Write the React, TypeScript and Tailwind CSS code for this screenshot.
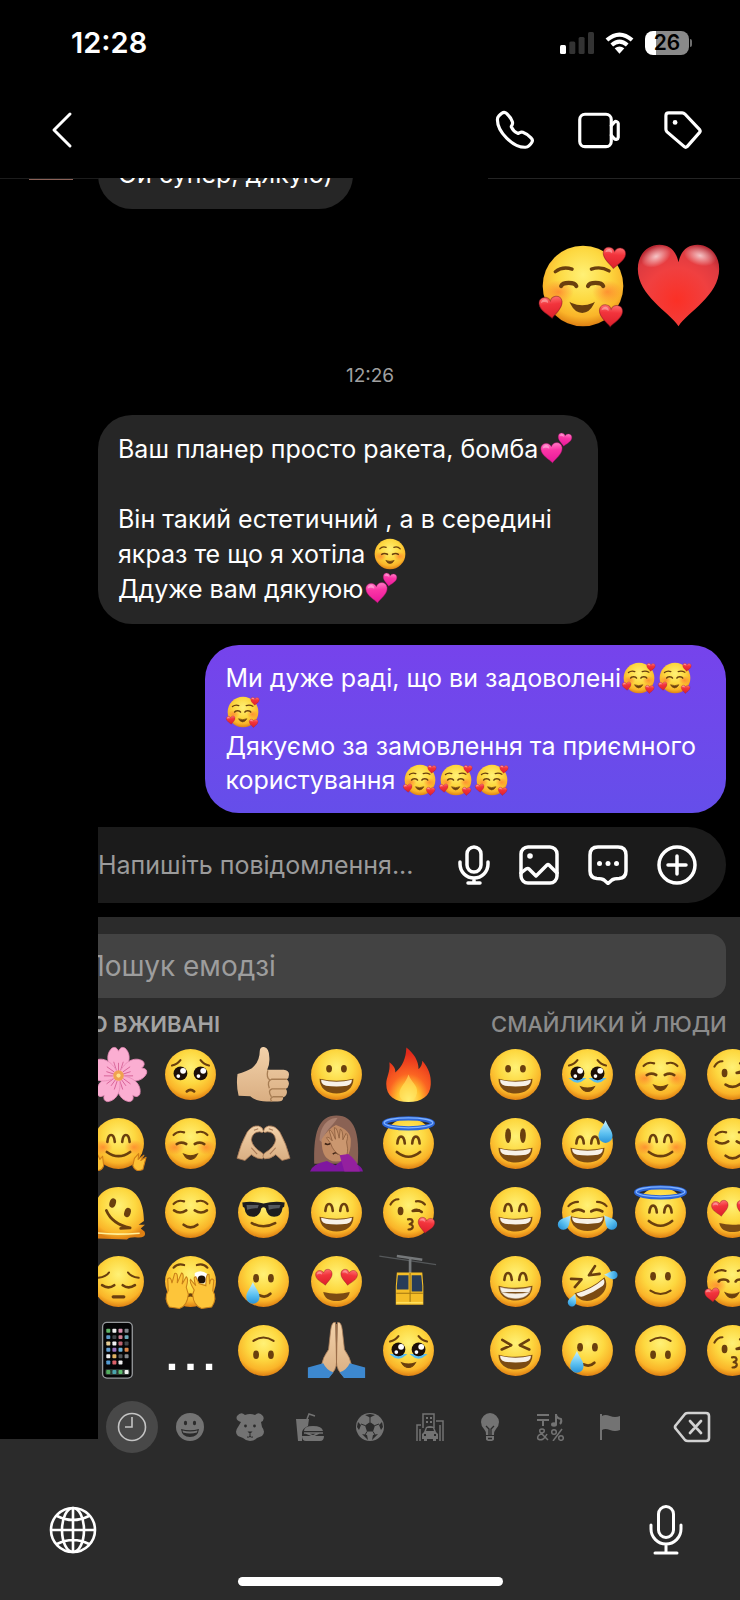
import type { ReactNode } from "react";

const ink = "#6a3f0e";

const Defs = () => (
  <svg className="absolute h-0 w-0" aria-hidden="true">
    <defs>
      <radialGradient id="face" cx="50%" cy="36%" r="64%">
        <stop offset="0" stopColor="#fff176" />
        <stop offset="0.5" stopColor="#fdd840" />
        <stop offset="0.82" stopColor="#fab429" />
        <stop offset="1" stopColor="#de8013" />
      </radialGradient>
      <linearGradient id="heart" x1="0" y1="0" x2="0" y2="1">
        <stop offset="0" stopColor="#ff6f70" />
        <stop offset="0.35" stopColor="#f2343c" />
        <stop offset="1" stopColor="#dc1f2b" />
      </linearGradient>
      <radialGradient id="bigHeart" cx="48%" cy="68%" r="72%">
        <stop offset="0" stopColor="#fb3026" />
        <stop offset="0.55" stopColor="#f04040" />
        <stop offset="0.85" stopColor="#dd3a40" />
        <stop offset="1" stopColor="#b82832" />
      </radialGradient>
      <radialGradient id="shine">
        <stop offset="0" stopColor="#fff" stopOpacity="0.7" />
        <stop offset="1" stopColor="#fff" stopOpacity="0" />
      </radialGradient>
      <linearGradient id="pink" x1="0" y1="0" x2="0" y2="1">
        <stop offset="0" stopColor="#ff7cc4" />
        <stop offset="0.35" stopColor="#fb35a6" />
        <stop offset="1" stopColor="#e8179a" />
      </linearGradient>
      <linearGradient id="drop" x1="0" y1="0" x2="0" y2="1">
        <stop offset="0" stopColor="#c9f1ff" />
        <stop offset="0.6" stopColor="#5bc0f0" />
        <stop offset="1" stopColor="#2a93d8" />
      </linearGradient>
      <radialGradient id="flush">
        <stop offset="0" stopColor="#ff6a2b" stopOpacity="0.6" />
        <stop offset="1" stopColor="#ff6a2b" stopOpacity="0" />
      </radialGradient>
      <radialGradient id="flame" cx="50%" cy="95%" r="85%">
        <stop offset="0" stopColor="#fff583" />
        <stop offset="0.3" stopColor="#ffc02e" />
        <stop offset="0.55" stopColor="#fb6422" />
        <stop offset="1" stopColor="#e2291b" />
      </radialGradient>
      <linearGradient id="skin" x1="0" y1="0" x2="0" y2="1">
        <stop offset="0" stopColor="#f3d2aa" />
        <stop offset="1" stopColor="#d9ae82" />
      </linearGradient>
    </defs>
  </svg>
);

const heartPath = "M50 92C38 76 4 58 4 30C4 14 15 6 27 6C38 6 46 12 50 22C54 12 62 6 73 6C85 6 96 14 96 30C96 58 62 76 50 92Z";

const Heart = ({ x, y, s, r = 0, fill = "url(#heart)", edge = "#7c1220" }: { x: number; y: number; s: number; r?: number; fill?: string; edge?: string }) => (
  <g transform={`translate(${x} ${y}) rotate(${r}) scale(${s / 100}) translate(-50 -50)`}>
    <path d={heartPath} fill={fill} stroke={edge} strokeOpacity="0.5" strokeWidth="4" />
    <path d="M12 28C13 16 24 11 32 14C40 17 42 24 40 30C30 22 18 24 12 28Z" fill="#fff" opacity="0.35" />
  </g>
);

const Drop = ({ x, y, s = 1, r = 0 }: { x: number; y: number; s?: number; r?: number }) => (
  <path
    transform={`translate(${x} ${y}) rotate(${r}) scale(${s})`}
    d="M0 -20C5 -8 12 -2 12 7A12 12 0 0 1 -12 7C-12 -2 -5 -8 0 -20Z"
    fill="url(#drop)"
  />
);

const Line = ({ d, w = 4 }: { d: string; w?: number }) => (
  <path d={d} fill="none" stroke={ink} strokeWidth={w} strokeLinecap="round" strokeLinejoin="round" />
);

const Ball = () => <circle cx="50" cy="50" r="48" fill="url(#face)" />;

const Flush = () => (
  <>
    <ellipse cx="21" cy="57" rx="18" ry="14" fill="url(#flush)" />
    <ellipse cx="79" cy="57" rx="18" ry="14" fill="url(#flush)" />
  </>
);

const Ovals = ({ y = 40, ry = 8, x1 = 36, x2 = 64 }: { y?: number; ry?: number; x1?: number; x2?: number }) => (
  <>
    <ellipse cx={x1} cy={y} rx="5.5" ry={ry} fill={ink} />
    <ellipse cx={x2} cy={y} rx="5.5" ry={ry} fill={ink} />
  </>
);

const Arches = ({ y = 0 }: { y?: number }) => (
  <g transform={`translate(0 ${y})`}>
    <Line w={5} d="M29 47C30 36 33 34 36 34C39 34 42 36 43 47M57 47C58 36 61 34 64 34C67 34 70 36 71 47" />
  </g>
);

const FlatArches = () => <Line w={5} d="M24 51Q32 46 42 51M58 51Q68 46 76 51" />;
const Brows = () => <Line w={4} d="M18 34Q26 25 38 29M62 29Q74 25 82 34" />;

const Laugh = ({ y = 0, teeth = false }: { y?: number; teeth?: boolean }) => (
  <g transform={`translate(0 ${y})`}>
    <path d="M18 58Q50 66 82 58C82 76 68 86 50 86S18 76 18 58Z" fill="#7b4b13" />
    {teeth ? (
      <path d="M21 61Q50 68 79 61C77 76 66 82 50 82S23 76 21 61ZM22 70Q50 76 78 70" fill="#f5efe6" stroke="#c8bba6" strokeWidth="1" />
    ) : (
      <path d="M21 60Q50 67 79 60C79 67 75 70 70 71Q50 74 30 71C25 70 21 67 21 60Z" fill="#f7f1e8" />
    )}
  </g>
);

const Relaxed = () => (
  <>
    <Ball />
    <Flush />
    <Brows />
    <FlatArches />
    <path d="M37 70Q50 76 63 70Q58 80 50 80T37 70Z" fill={ink} stroke={ink} strokeWidth="2" />
  </>
);

const Loved = () => (
  <>
    <Ball />
    <Flush />
    <Line w={4} d="M17 33Q26 26 37 30M60 30Q71 26 81 32" />
    <Line w={5} d="M24 50C26 45 40 45 42 50M56 50C58 45 72 45 74 50" />
    <path d="M36 71Q49 77 62 71Q57 81 49 81T36 71Z" fill={ink} stroke={ink} strokeWidth="2" />
    <Heart x={87} y={17} s={29} r={4} />
    <Heart x={12} y={76} s={30} r={-6} />
    <Heart x={83} y={86} s={30} r={3} />
  </>
);

const ShinyEyes = ({ tear = false }: { tear?: boolean }) => (
  <>
    {tear && <path d="M18 58Q31 70 44 58ZM56 58Q69 70 82 58Z" fill="#59bdf0" stroke="#59bdf0" strokeWidth="3" />}
    <circle cx="31" cy="48" r="13" fill="#1c0f08" />
    <circle cx="69" cy="48" r="13" fill="#1c0f08" />
    <circle cx="36" cy="43" r="5.5" fill="#fff" />
    <circle cx="74" cy="43" r="5.5" fill="#fff" />
    <circle cx="27" cy="53" r="3.5" fill="#fff" />
    <circle cx="65" cy="53" r="3.5" fill="#fff" />
    <Line d="M15 33Q25 31 31 23M85 33Q75 31 69 23" />
  </>
);

const Winking = ({ kiss = false }: { kiss?: boolean }) => (
  <>
    <Ball />
    <Line d="M16 35Q21 25 31 25M64 29Q74 27 81 35" />
    <ellipse cx="35" cy="47" rx="5.5" ry="8" fill={ink} />
    <Line w={5} d="M58 47Q67 42 75 49M58 47L70 46" />
    {kiss ? (
      <>
        <Line w={4} d="M49 63C59 61 61 69 52 72C61 73 60 82 50 82" />
        <Heart x={83} y={75} s={34} r={8} />
      </>
    ) : (
      <Line w={5} d="M37 69Q52 79 67 66" />
    )}
  </>
);

const Halo = () => (
  <>
    <Ball />
    <ellipse cx="50" cy="12" rx="46" ry="9.5" fill="none" stroke="#2c66d8" strokeWidth="8" />
    <ellipse cx="50" cy="11" rx="46" ry="9.5" fill="none" stroke="#7fb2ff" strokeWidth="2.5" />
    <Arches y={3} />
    <Line w={5} d="M28 66Q50 84 72 66" />
  </>
);

const HeartEyes = () => (
  <>
    <Ball />
    <Heart x={27} y={43} s={34} r={-8} />
    <Heart x={73} y={43} s={34} r={8} />
    <path d="M25 70Q50 76 75 70C73 82 63 87 50 87S27 82 25 70Z" fill="#7b4b13" />
  </>
);

const TearSmile = () => (
  <>
    <Ball />
    <Ovals y={44} />
    <Line w={5} d="M42 76Q54 82 63 73" />
    <Drop x={30} y={72} s={1.05} />
  </>
);

const art: Record<string, ReactNode> = {
  "🥰": <Loved />,
  "☺️": <Relaxed />,
  "❤️": (
    <>
      <path d="M50 99C39 82 1 62 1 30C1 12 13 1 27 1C39 1 47 8 50 22C53 8 61 1 73 1C87 1 99 12 99 30C99 62 61 82 50 99Z" fill="url(#bigHeart)" />
      <ellipse cx="23" cy="15" rx="19" ry="12" fill="url(#shine)" transform="rotate(-25 23 15)" />
      <ellipse cx="76" cy="14" rx="20" ry="12" fill="url(#shine)" transform="rotate(15 76 14)" />
    </>
  ),
  "💕": (
    <>
      <Heart x={37} y={63} s={72} r={-4} fill="url(#pink)" edge="#c8107f" />
      <Heart x={77} y={22} s={46} r={8} fill="url(#pink)" edge="#c8107f" />
    </>
  ),
  "🌸": (
    <>
      {[0, 72, 144, 216, 288].map((a) => (
        <g key={a} transform={`rotate(${a} 50 52)`}>
          <path d="M50 52C28 36 24 12 38 0Q46 -4 50 6Q54 -4 62 0C76 12 72 36 50 52Z" fill="#fbaed2" stroke="#e88bb8" strokeWidth="1.5" />
          <path d="M50 48V28M46 42L41 26M54 42L59 26" stroke="#c8447f" strokeWidth="1.2" />
        </g>
      ))}
      <circle cx="50" cy="52" r="10" fill="#f0a24f" />
      <circle cx="50" cy="52" r="4" fill="#ffe08a" />
    </>
  ),
  "🥺": (
    <>
      <Ball />
      <ShinyEyes />
      <Line w={5} d="M43 82Q50 76 57 82" />
    </>
  ),
  "🥹": (
    <>
      <Ball />
      <ShinyEyes tear />
      <path d="M37 73Q50 78 63 73Q58 82 50 82T37 73Z" fill={ink} stroke={ink} strokeWidth="2" />
    </>
  ),
  "👍🏼": (
    <>
      <path d="M1 49Q18 44 28 38Q43 26 43 5Q44 -3 51 -2Q61 0 61 18Q62 31 57 41H88Q99 42 98 51Q98 57 94 59Q100 64 97 71Q96 76 92 77Q96 82 93 88Q91 92 87 93Q88 101 77 101H56Q36 101 25 91L3 90Q-2 70 1 49Z" fill="url(#skin)" />
      <path d="M58 42Q55 57 62 60M94 59H65Q56 62 61 76M92 77H66Q57 80 65 92M87 92H68Q60 96 66 101" fill="none" stroke="#a77d53" strokeWidth="2.5" />
    </>
  ),
  "😀": (
    <>
      <Ball />
      <Ovals y={39} ry={7} />
      <Laugh />
    </>
  ),
  "😃": (
    <>
      <Ball />
      <Ovals y={35} ry={14} />
      <Laugh />
    </>
  ),
  "🔥": (
    <>
      <path d="M46 -1C60 10 69 24 69 40C74 35 76 30 76 24C88 38 93 52 92 69C91 91 75 102 50 102C24 102 8 91 8 68C8 54 16 47 14 27C22 33 26 40 25 46C39 34 45 20 46 -1Z" fill="url(#flame)" />
      <path d="M50 50C54 64 68 69 66 85Q63 101 48 101Q33 100 33 86C33 73 45 67 50 50Z" fill="#ffe660" opacity="0.6" />
    </>
  ),
  "🤗": (
    <>
      <Ball />
      <Flush />
      <Arches />
      <Line w={5} d="M28 66Q50 82 72 66" />
      <path d="M-2 70L8 78L10 70L15 80L20 74L22 92Q18 104 5 100ZM102 76L92 82L98 72L87 80L88 69L80 78L77 92Q82 105 96 99Z" fill="#fcc135" stroke="#cf7e17" strokeWidth="2" strokeLinejoin="round" />
    </>
  ),
  "🫶🏼": (
    <>
      <path d="M0 78Q7 50 19 29Q28 15 41 17Q49 19 50 27Q49 31 43 28Q29 28 27 43Q29 57 48 68Q54 75 48 79Q38 80 27 71L15 82Z" fill="url(#skin)" stroke="#a77855" strokeWidth="1.5" />
      <path d="M100 78Q93 50 81 29Q72 15 59 17Q51 19 50 27Q51 31 57 28Q71 28 73 43Q71 57 52 68Q46 75 52 79Q62 80 73 71L85 82Z" fill="url(#skin)" stroke="#a77855" strokeWidth="1.5" />
      <path d="M32 25L40 22M68 25L60 22M27 58L38 70M73 58L62 70" stroke="#a77855" strokeWidth="2" />
    </>
  ),
  "🤦🏽‍♀️": (
    <>
      <path d="M8 88C6 30 16 -3 50 -3S94 30 90 88Z" fill="#8a6254" />
      <path d="M18 44C20 10 40 1 52 2C42 18 28 25 23 48Z" fill="#a98070" />
      <path d="M22 42Q34 22 49 15Q78 25 77 46Q77 84 49 84T22 42Z" fill="#c08a64" />
      <path d="M28 50Q34 54 40 49M43 70Q49 65 54 70" fill="none" stroke="#3f2416" strokeWidth="3" />
      <path d="M0 103Q5 88 32 83L48 91L67 78L86 89Q98 92 100 103Z" fill="#7f16a0" />
      <path d="M58 73Q44 66 39 50L31 39Q35 36 42 45L36 25Q40 22 48 42L46 20Q51 19 55 40L57 23Q62 23 62 43L68 31Q73 34 69 47L71 60Q71 72 67 76Z" fill="#cb976f" stroke="#8a5c3d" strokeWidth="1.5" />
      <path d="M56 72L72 70Q90 82 94 103H65Z" fill="#94209f" />
    </>
  ),
  "😇": <Halo />,
  "🫠": (
    <>
      <path d="M2 72C-2 28 18 2 50 2S98 28 98 66L88 73H100L92 80L99 86Q104 98 86 97Q70 96 66 101L8 99Q-4 96 2 84Z" fill="url(#face)" />
      <ellipse cx="39" cy="32" rx="6" ry="9" fill={ink} transform="rotate(18 39 32)" />
      <ellipse cx="67" cy="50" rx="6" ry="9" fill={ink} transform="rotate(18 67 50)" />
      <Line w={5} d="M27 46Q38 72 72 79M54 80L72 79" />
      <path d="M5 88Q40 93 90 89" stroke="#fff09a" strokeWidth="3" fill="none" />
    </>
  ),
  "😌": (
    <>
      <Ball />
      <Brows />
      <Line w={5} d="M19 46Q30 54 42 46M58 46Q70 54 81 46" />
      <Line w={5} d="M37 73Q50 83 63 73" />
    </>
  ),
  "😎": (
    <>
      <Ball />
      <path d="M10 31Q30 28 50 33Q70 28 90 31L89 39L86 41Q84 58 70 58Q57 58 54 42Q50 38 46 42Q43 58 30 58Q16 58 14 41L11 39Z" fill="#1d1d1f" />
      <path d="M18 36L41 36L39 42Q29 41 19 45ZM59 36L82 36L80 42Q70 41 60 45Z" fill="#55595e" />
      <Line w={5} d="M28 70Q50 82 72 70" />
    </>
  ),
  "😄": (
    <>
      <Ball />
      <Arches />
      <Laugh />
    </>
  ),
  "😁": (
    <>
      <Ball />
      <Arches />
      <Laugh teeth />
    </>
  ),
  "😘": <Winking kiss />,
  "😉": <Winking />,
  "😔": (
    <>
      <Ball />
      <Line d="M12 43Q27 41 32 33M88 43Q73 41 68 33" />
      <Line w={5} d="M19 57Q31 65 42 57M58 57Q69 65 81 57" />
      <Line w={6} d="M40 79H60" />
    </>
  ),
  "🫣": (
    <>
      <Ball />
      <Line w={4} d="M18 24Q26 15 38 19M62 19Q74 15 82 24" />
      <path d="M58 34Q70 26 82 36V54H58Z" fill="#fff" />
      <circle cx="71" cy="46" r="7.5" fill="#21130a" />
      <path d="M40 80Q50 70 60 80" stroke={ink} strokeWidth="6" fill="none" />
      <path
        d="M10 98Q-1 82 8 67L7 45Q13 39 15 53L20 35Q27 31 25 53L33 34Q39 35 34 55L42 41Q47 44 42 61L46 74Q44 96 29 101ZM90 98Q101 82 92 67L94 48Q88 40 86 55L85 37Q79 33 79 58L66 54L60 41Q54 40 60 58L50 46Q47 50 57 66L54 75Q56 96 71 101Z"
        fill="#fdc53a"
        stroke="#c98019"
        strokeWidth="2"
      />
    </>
  ),
  "🥲": <TearSmile />,
  "😍": <HeartEyes />,
  "🚡": (
    <>
      <path d="M-5 2L102 18" stroke="#55585a" strokeWidth="2.5" />
      <path d="M28 2L76 9M53 8V36" stroke="#75787a" strokeWidth="5" />
      <path d="M28 33H76L78 59V94H26V59Z" fill="#f4bd27" />
      <path d="M30 38H50V65H28V58ZM56 38H74L76 58V69H56Z" fill="#273c59" />
      <path d="M53 34V91M27 72H77" stroke="#a17611" strokeWidth="2" />
      <path d="M27 90H77" stroke="#ffe05d" strokeWidth="3" />
    </>
  ),
  "📱": (
    <>
      <rect x="20" y="-3" width="56" height="105" rx="8" fill="#050506" stroke="#96999c" strokeWidth="2.5" />
      {["#61b569", "#eeeeee", "#d88fae", "#80868d", "#5b96c8", "#43474b", "#cc7d90", "#6ba9b9", "#e5cc93", "#f2f2f2", "#bd6472", "#44484b", "#629fd1", "#9871bd", "#6eb2d5", "#de8748", "#eeeeee", "#e1b364", "#54575a", "#85898d", "#539bd2", "#dd6269", "#eeeeee"].map((c, i) => (
        <rect key={i} x={27 + (i % 4) * 11.5} y={9 + Math.floor(i / 4) * 12} width="7.5" height="7.5" rx="1.5" fill={c} />
      ))}
      <rect x="25" y="85" width="46" height="11" rx="3" fill="#2d3833" />
      {["#52ae5e", "#4aa5ae", "#5ebd6f", "#f2f2f2"].map((c, i) => (
        <rect key={c} x={27 + i * 11.5} y="87" width="7.5" height="7.5" rx="1.5" fill={c} />
      ))}
    </>
  ),
  "…": <path d="M9 75H21V87H9ZM44 75H56V87H44ZM79 75H91V87H79Z" fill="#fff" />,
  "🙃": (
    <>
      <Ball />
      <Ovals y={58} />
      <Line d="M31 32Q50 19 69 32" />
    </>
  ),
  "🙂": (
    <>
      <Ball />
      <Ovals y={40} />
      <Line d="M31 67Q50 80 69 67" />
    </>
  ),
  "🙏🏼": (
    <>
      <path d="M48 -3Q41 -5 39 12L35 48Q24 63 21 80L37 98Q50 87 50 72Z" fill="url(#skin)" stroke="#a87c57" strokeWidth="1.5" />
      <path d="M52 -3Q59 -5 61 12L65 48Q76 63 79 80L63 98Q50 87 50 72Z" fill="url(#skin)" stroke="#a87c57" strokeWidth="1.5" />
      <path d="M50 0V78" stroke="#9a6d49" strokeWidth="2" />
      <path d="M-4 82L25 74Q31 87 44 91L36 102H-4ZM104 82L75 74Q69 87 56 91L64 102H104Z" fill="#3d88cf" />
    </>
  ),
  "😅": (
    <>
      <Ball />
      <Arches y={3} />
      <Laugh />
      <Drop x={84} y={28} s={1.1} />
    </>
  ),
  "😊": (
    <>
      <Ball />
      <Flush />
      <Arches />
      <Line w={5} d="M28 66Q50 82 72 66" />
    </>
  ),
  "😂": (
    <>
      <Ball />
      <Line w={5} d="M22 48Q33 41 43 48M57 48Q67 41 78 48" />
      <Line d="M14 38Q21 30 32 30M86 38Q79 30 68 30" />
      <Laugh y={-1} />
      <Drop x={8} y={68} s={0.85} r={40} />
      <Drop x={92} y={68} s={0.85} r={-40} />
    </>
  ),
  "🤣": (
    <>
      <Ball />
      <g transform="rotate(-28 50 50)">
        <Line w={5} d="M25 31L42 41L24 48M76 31L58 41L77 48" />
        <Laugh />
        <Drop x={9} y={68} s={0.65} r={50} />
        <Drop x={95} y={60} s={0.65} r={-60} />
      </g>
    </>
  ),
  "😆": (
    <>
      <Ball />
      <Line w={5} d="M25 30L42 40L24 48M75 30L58 40L76 48" />
      <Laugh />
    </>
  ),
  "😗": (
    <>
      <Ball />
      <Line d="M16 35Q21 25 31 25M64 29Q74 27 81 35" />
      <ellipse cx="35" cy="47" rx="5.5" ry="8" fill={ink} />
      <Line w={5} d="M58 47Q67 42 75 49M58 47L70 46" />
      <Line w={4} d="M49 63C59 61 61 69 52 72C61 73 60 82 50 82" />
    </>
  ),
};

const Emoji = ({ e, className }: { e: string; className: string }) => (
  <svg viewBox="0 0 100 100" role="img" aria-label={e} className={`shrink-0 overflow-visible ${className}`}>
    {art[e]}
  </svg>
);

const T = ({ e }: { e: string }) => <Emoji e={e} className="mx-[2px] inline-block size-8 align-[-7px]" />;

const recent = ["🌸", "🥺", "👍🏼", "😀", "🔥", "🤗", "☺️", "🫶🏼", "🤦🏽‍♀️", "😇", "🫠", "😌", "😎", "😄", "😘", "😔", "🫣", "🥲", "😍", "🚡", "📱", "…", "🙃", "🙏🏼", "🥹"];
const people = ["😀", "🥹", "☺️", "😉", "😃", "😅", "😊", "😌", "😄", "😂", "😇", "😍", "😁", "🤣", "🙂", "🥰", "😆", "🥲", "🙃", "😗"];

const EmojiKey = ({ e }: { e: string }) => (
  <button type="button" className="flex h-[69px] items-center justify-center">
    <Emoji e={e} className="size-[53px]" />
  </button>
);

const Icon = ({ children, className, w = 2 }: { children: ReactNode; className: string; w?: number }) => (
  <svg viewBox="0 0 24 24" fill="none" stroke="currentColor" strokeWidth={w} strokeLinecap="round" strokeLinejoin="round" aria-hidden="true" className={`overflow-visible ${className}`}>
    {children}
  </svg>
);

const categories: { name: string; icon: ReactNode }[] = [
  {
    name: "Смайлики",
    icon: (
      <>
        <circle cx="14" cy="14" r="14" fill="#737373" />
        <ellipse cx="9.5" cy="10" rx="1.6" ry="2.2" fill="#2b2b2b" />
        <ellipse cx="18.5" cy="10" rx="1.6" ry="2.2" fill="#2b2b2b" />
        <path d="M5 16Q14 18.5 23 16Q22 24 14 24T5 16Z" fill="#2b2b2b" />
        <path d="M6.500 17.500Q14 19.500 21.500 17.500L21 19.500Q14 21.500 7 19.500Z" fill="#737373" />
      </>
    ),
  },
  {
    name: "Тварини",
    icon: (
      <>
        <path d="M5 9Q-1 7 1 3Q5 -2 9 2Q14 0 19 2Q23 -2 27 3Q29 7 25 9L26 14Q30 19 26 23L21 25Q18 28 14 28T7 25L2 23Q-2 19 2 14Z" fill="#737373" />
        <circle cx="9.5" cy="13" r="1.400" fill="#2b2b2b" />
        <circle cx="18.5" cy="13" r="1.400" fill="#2b2b2b" />
        <path d="M11.500 18.500H16.500L14 21Z" fill="#2b2b2b" />
        <path d="M14 21V24M11 24Q12.500 24.500 14 23.500Q15.500 24.500 17 24" fill="none" stroke="#2b2b2b" />
      </>
    ),
  },
  {
    name: "Їжа",
    icon: (
      <>
        <path d="M0 6H13L12 13Q7 15 6 19V28H2ZM8 18Q8 13 17 13T27 18ZM6 23H28Q28 28 24 28H10Q6 28 6 23Z" fill="#737373" />
        <path d="M11 6L13 1L19 3M8 20H27M10 20L17 23L23 20" fill="none" stroke="#737373" strokeWidth="1.5" />
      </>
    ),
  },
  {
    name: "Активності",
    icon: (
      <>
        <circle cx="14" cy="14" r="14" fill="#737373" />
        <path d="M14 9L19 12.500L17 18.500H11L9 12.500ZM9 2L14 4.500L19 2L14 1ZM2 9L5 12L3 17L1 14ZM26 9L23 12L25 17L27 14ZM6 21L11 22L12 27ZM22 21L17 22L16 27Z" fill="#2b2b2b" />
        <path d="M14 9V4M19 12.500L23 11M17 18.500L19 22M11 18.500L9 22M9 12.500L5 11" stroke="#2b2b2b" />
      </>
    ),
  },
  {
    name: "Подорожі",
    icon: (
      <>
        <path d="M1 28V12H5M7 15V1H18V15M20 8H27V28M4 16V28M24 12V28" fill="none" stroke="#737373" strokeWidth="1.5" />
        <path d="M10 5H12M14 5H16M10 9H12M14 9H16" stroke="#737373" strokeWidth="2" />
        <path d="M8 19L10 14Q14 12 18 14L20 19L22 21V26H20V28H17V26H11V28H8V26H6V21Z" fill="#737373" />
        <path d="M10 18L11 15H17L18 18ZM8 21H10V23H8ZM18 21H20V23H18Z" fill="#2b2b2b" />
      </>
    ),
  },
  {
    name: "Об’єкти",
    icon: (
      <>
        <path d="M14 0A9.500 9.500 0 0 1 23 9Q23 13 20 16Q18 18 18 22H10Q10 18 8 16Q5 13 5 9A9.500 9.500 0 0 1 14 0ZM10 23H18V26Q18 28 14 28T10 26Z" fill="#737373" />
        <path d="M10 13L13 16V23M18 13L15 16V23M12 25.500H16" stroke="#2b2b2b" strokeWidth="1.3" fill="none" />
      </>
    ),
  },
  {
    name: "Символи",
    icon: (
      <>
        <path d="M1 2H13M1 7H13M7 7V13M20 12V1Q20 5 25 6Q26 9 24 11" fill="none" stroke="#737373" strokeWidth="2" />
        <ellipse cx="18" cy="11.5" rx="3" ry="2.2" fill="#737373" />
        <path d="M12 27L4 19Q3 16 6 16T8 19L3 22Q1 24 2 26Q7 29 11 21M26 16L17 28" fill="none" stroke="#737373" strokeWidth="1.5" />
        <circle cx="18" cy="19" r="2.3" fill="none" stroke="#737373" strokeWidth="1.5" />
        <circle cx="25" cy="25" r="2.3" fill="none" stroke="#737373" strokeWidth="1.5" />
      </>
    ),
  },
  {
    name: "Прапори",
    icon: <path d="M4 1H6V3Q9 1 14 3T24 3V17Q19 19 14 17T6 17V27H4Z" fill="#737373" />,
  },
];

const StatusBar = () => (
  <div className="flex h-[85px] items-center justify-between pr-[48px] pl-[71px]">
    <time className="text-[29px] leading-8 font-semibold">12:28</time>
    <div className="flex items-center gap-[11px]">
      <svg viewBox="0 0 34 22" className="h-[22px] w-[34px]" aria-label="Сигнал" role="img">
        <rect x="0" y="13" width="6" height="9" rx="1.5" fill="#fff" />
        <rect x="9.3" y="9.500" width="6" height="12.5" rx="1.5" fill="#333" />
        <rect x="18.6" y="5" width="6" height="17" rx="1.5" fill="#333" />
        <rect x="28" y="0" width="6" height="22" rx="1.5" fill="#333" />
      </svg>
      <svg viewBox="0 0 30 22" className="h-[22px] w-[29px]" aria-label="Wi-Fi" role="img">
        <path d="M2 8Q15 -3.500 28 8M7 13Q15 6 23 13" fill="none" stroke="#fff" strokeWidth="4.2" />
        <path d="M10 16.500Q15 12.500 20 16.500L15 22Z" fill="#fff" />
      </svg>
      <div className="flex items-center gap-px">
        <span className="flex h-6 w-[44px] items-center justify-center rounded-[8px] bg-[linear-gradient(90deg,#fff_26%,#8a8a8a_26%)] text-[21px] leading-6 font-semibold text-black">26</span>
        <span className="h-2 w-[2px] rounded-r-full bg-[#6f6f6f]" />
      </div>
    </div>
  </div>
);

const NavBar = () => (
  <header className="flex h-[93px] items-center justify-between pr-[38px] pl-[50px] pb-[3px]">
    <button type="button" aria-label="Назад">
      <svg viewBox="0 0 24 38" className="h-[38px] w-6" fill="none" stroke="#fff" strokeWidth="3" strokeLinecap="round" strokeLinejoin="round">
        <path d="M20 3L4 19L20 35" />
      </svg>
    </button>
    <div className="flex items-center gap-[44px]">
      <button type="button" aria-label="Зателефонувати">
        <Icon className="size-[38px]" w={2}>
          <path d="M18.227 22.912c-4.913 0-9.286-3.627-11.486-5.828C4.486 14.830.731 10.291.921 5.231a3.289 3.289 0 0 1 .908-2.138 17.116 17.116 0 0 1 1.865-1.710 2.307 2.307 0 0 1 3.004.174 13.283 13.283 0 0 1 3.658 5.325 2.551 2.551 0 0 1-.190 1.941l-.455.853a.463.463 0 0 0-.024.387 7.570 7.570 0 0 0 4.077 4.075.455.455 0 0 0 .386-.024l.853-.455a2.548 2.548 0 0 1 1.940-.190 13.278 13.278 0 0 1 5.326 3.658 2.309 2.309 0 0 1 .174 3.003 17.319 17.319 0 0 1-1.710 1.866 3.290 3.290 0 0 1-2.138.910 10.270 10.270 0 0 1-.368.006Z" />
        </Icon>
      </button>
      <button type="button" aria-label="Відеодзвінок">
        <Icon className="size-[42px]" w={1.8}>
          <rect x="1" y="3" width="18" height="18.500" rx="3" />
          <path d="m19 9.500 1.800-2A1.300 1.300 0 0 1 23 8.300v7.900a1.300 1.300 0 0 1-2.200.8L19 15" />
        </Icon>
      </button>
      <button type="button" aria-label="Мітка">
        <Icon className="size-[38px]" w={2}>
          <path d="M1.200 3Q1.200 1.200 3 1.200H11.500Q12.500 1.200 13.200 1.900L22.500 11.800Q23.200 12.700 22.500 13.500L14.600 22.500Q13.700 23.300 12.800 22.500L1.900 13.200Q1.200 12.500 1.200 11.500Z" />
          <circle cx="7" cy="7.2" r="1.500" fill="currentColor" stroke="none" />
        </Icon>
      </button>
    </div>
  </header>
);

export default function App() {
  return (
    <div className="flex min-h-screen w-full flex-col overflow-hidden bg-black font-[Inter,'Liberation_Sans',sans-serif] text-white">
      <Defs />
      <StatusBar />
      <NavBar />

      <main className="flex flex-col">
        <div className="flex h-[31px] items-start overflow-hidden">
          <div className="flex w-[98px] shrink-0 justify-center border-t border-[#1c1c1c]">
            <span className="ml-1 h-px w-[44px] bg-[#8b6258]" />
          </div>
          <div className="flex h-full flex-col justify-end">
            <p className="rounded-[34px] bg-[#262626] px-[20px] pt-[16px] pb-[18px] text-[25px] leading-[34px]">Ой супер, дякую)</p>
          </div>
          <span className="ml-auto h-px w-[252px] bg-[#242424]" />
        </div>

        <div className="mt-[35px] mr-[20px] flex items-start justify-end gap-[12px]">
          <Emoji e="🥰" className="size-[84px]" />
          <Emoji e="❤️" className="size-[83px]" />
        </div>

        <time className="mt-[36px] text-center text-[19px] leading-6 text-[#a0a0a0]">12:26</time>

        <div className="mt-[27px] mr-[14px] ml-[98px] flex flex-col gap-[21px]">
          <div className="self-start rounded-[34px] bg-[#262626] py-[17px] pr-[24px] pl-[20px] text-[25px] leading-[35px]">
            <p>Ваш планер просто ракета, бомба<T e="💕" /></p>
            <p className="h-[35px]" />
            <p>Він такий естетичний , а в середині</p>
            <p>якраз те що я хотіла <T e="☺️" /></p>
            <p>Ддуже вам дякуюю<T e="💕" /></p>
          </div>
          <div className="self-end rounded-[34px] bg-linear-to-b from-[#7643ec] to-[#654eea] py-[16px] pr-[30px] pl-[20px] text-[25px] leading-[34px]">
            <p>Ми дуже раді, що ви задоволені<T e="🥰" /><T e="🥰" /></p>
            <p><T e="🥰" /></p>
            <p>Дякуємо за замовлення та приємного</p>
            <p>користування <T e="🥰" /><T e="🥰" /><T e="🥰" /></p>
          </div>
        </div>

        <form className="mt-[14px] mr-[14px] ml-[98px] flex h-[76px] items-center rounded-r-[38px] bg-[#1b1b1b] pr-[29px]">
          <input aria-label="Повідомлення" placeholder="Напишіть повідомлення..." className="min-w-0 flex-1 bg-transparent text-[25px] leading-8 outline-none placeholder:text-[#9b9b9b]" />
          <div className="flex items-center gap-[29px]">
            <button type="button" aria-label="Голосове повідомлення">
              <svg viewBox="0 0 32 40" className="h-10 w-8" fill="none" stroke="#fff" strokeWidth="3.500" strokeLinecap="round">
                <rect x="9" y="2" width="14" height="25" rx="7" />
                <path d="M2 17V19A14 14 0 0 0 30 19V17M16 33V37M10 38H22" />
              </svg>
            </button>
            <button type="button" aria-label="Фото">
              <svg viewBox="0 0 40 40" className="size-10" fill="none" stroke="#fff" strokeWidth="3.500" strokeLinejoin="round" strokeLinecap="round">
                <rect x="2" y="2" width="36" height="36" rx="7" />
                <circle cx="11" cy="11" r="2.800" fill="#fff" stroke="none" />
                <path d="M2 28L7 24Q9 23 10 24L17 31L28 20Q29 19 30 20L38 28" />
              </svg>
            </button>
            <button type="button" aria-label="Швидка відповідь">
              <svg viewBox="0 0 40 40" className="size-10" fill="none" stroke="#fff" strokeWidth="3.500" strokeLinejoin="round">
                <path d="M10 2H30Q38 2 38 10V26Q38 33 31 33.500Q26 33.500 24 35L20 38.500L16 35Q14 33.500 9 33.500Q2 33 2 26V10Q2 2 10 2Z" />
                <g fill="#fff" stroke="none">
                  <circle cx="11.5" cy="18.500" r="2.500" />
                  <circle cx="20" cy="18.500" r="2.500" />
                  <circle cx="28.5" cy="18.500" r="2.500" />
                </g>
              </svg>
            </button>
            <button type="button" aria-label="Додати">
              <svg viewBox="0 0 40 40" className="size-10" fill="none" stroke="#fff" strokeWidth="3.500" strokeLinecap="round">
                <circle cx="20" cy="20" r="18" />
                <path d="M20 11V29M11 20H29" />
              </svg>
            </button>
          </div>
        </form>
      </main>

      <section className="mt-[14px] flex flex-1 flex-col bg-[#2b2b2b]">
        <div className="flex">
          <div className="mb-[14px] w-[98px] shrink-0 bg-black" />
          <div className="flex min-w-0 flex-1 flex-col overflow-hidden">
            <input aria-label="Пошук емодзі" placeholder="Пошук емодзі" className="mt-[17px] mr-[14px] -ml-[22px] h-16 rounded-r-[16px] bg-[#434343] pl-[8px] text-[28px] outline-none placeholder:text-[#9d9d9d]" />
            <div className="mt-[10px] flex">
              <div className="-ml-[16px] w-[363px] shrink-0">
                <h2 className="flex h-[32px] w-[138px] items-center justify-end text-[22px] leading-8 font-semibold whitespace-nowrap text-[#a3a3a3]">ЧАСТО ВЖИВАНІ</h2>
                <div className="grid grid-cols-5">
                  {recent.map((e, i) => <EmojiKey key={i} e={e} />)}
                </div>
              </div>
              <div className="ml-[34px] w-[290px] shrink-0">
                <h2 className="flex h-[32px] items-center pl-[12px] text-[22px] leading-8 font-medium whitespace-nowrap text-[#8b8b8b]">СМАЙЛИКИ Й ЛЮДИ</h2>
                <div className="grid grid-cols-4">
                  {people.map((e, i) => <EmojiKey key={i} e={e} />)}
                </div>
              </div>
            </div>
            <nav className="mt-[16px] flex items-center justify-between pr-[29px] pl-[8px]">
              <div className="flex items-center gap-[32px]">
                <button type="button" aria-label="Часто вживані" className="-mr-[14px] flex size-[52px] items-center justify-center rounded-full bg-[#484848]">
                  <svg viewBox="0 0 28 28" className="size-7 overflow-visible" fill="none" stroke="#c4c4c4" strokeWidth="1.600">
                    <circle cx="14" cy="14" r="13.500" />
                    <path d="M14 4V14H7" />
                  </svg>
                </button>
                {categories.map((c) => (
                  <button key={c.name} type="button" aria-label={c.name}>
                    <svg viewBox="0 0 28 28" className="size-7" aria-hidden="true">{c.icon}</svg>
                  </button>
                ))}
              </div>
              <button type="button" aria-label="Стерти">
                <svg viewBox="0 0 38 32" className="h-8 w-[38px]" fill="none" stroke="#d2d2d2" strokeWidth="2.600" strokeLinejoin="round" strokeLinecap="round">
                  <path d="M15 2H33Q36 2 36 5V27Q36 30 33 30H15Q13 30 12 29L3 18Q1 16 3 14L12 3Q13 2 15 2ZM17 10L28 22M28 10L17 22" />
                </svg>
              </button>
            </nav>
          </div>
        </div>

        <div className="mt-[52px] flex items-center justify-between pr-[57px] pl-[49px]">
          <button type="button" aria-label="Мова">
            <svg viewBox="0 0 48 48" className="size-12" fill="none" stroke="#fff" strokeWidth="2.600">
              <circle cx="24" cy="24" r="22" />
              <ellipse cx="24" cy="24" rx="11" ry="22" />
              <path d="M24 2V46M2 24H46M8 10Q24 18 40 10M8 38Q24 30 40 38" />
            </svg>
          </button>
          <button type="button" aria-label="Диктування">
            <svg viewBox="0 0 34 50" className="h-[50px] w-[34px]" fill="none" stroke="#fff" strokeWidth="3" strokeLinecap="round">
              <rect x="9.5" y="1.500" width="15" height="31" rx="7.5" />
              <path d="M2 20V24A15 15 0 0 0 32 24V20M17 39V47M6 48H28" />
            </svg>
          </button>
        </div>
        <div className="mx-auto mt-auto mb-[14px] h-[9px] w-[265px] rounded-full bg-white" />
      </section>
    </div>
  );
}
